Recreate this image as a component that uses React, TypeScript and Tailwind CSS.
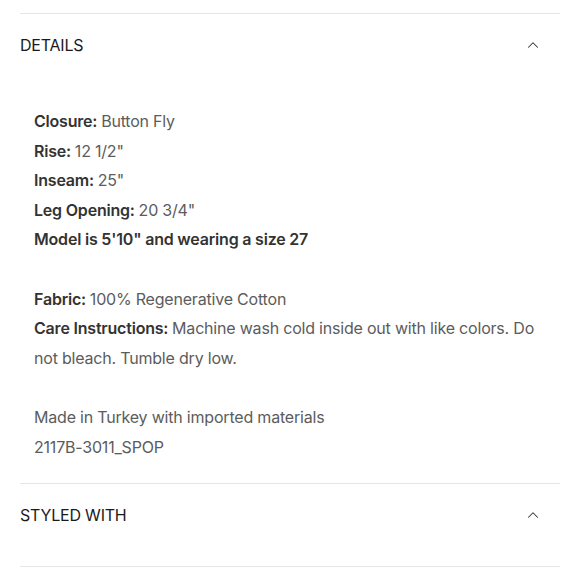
import { ChevronUp } from "lucide-react";

const details: { label?: string; value?: string; bold?: string }[][] = [
  [
    { label: "Closure:", value: "Button Fly" },
    { label: "Rise:", value: "12 1/2\"" },
    { label: "Inseam:", value: "25\"" },
    { label: "Leg Opening:", value: "20 3/4\"" },
    { bold: "Model is 5'10\" and wearing a size 27" },
  ],
  [
    { label: "Fabric:", value: "100% Regenerative Cotton" },
    {
      label: "Care Instructions:",
      value: "Machine wash cold inside out with like colors. Do not bleach. Tumble dry low.",
    },
  ],
  [{ value: "Made in Turkey with imported materials" }, { value: "2117B-3011_SPOP" }],
];

function SectionHeader({ title }: { title: string }) {
  return (
    <div className="flex h-[62px] items-center justify-between">
      <span className="text-[16px] tracking-[-0.2px] text-[#1a1a1a]">{title}</span>
      <ChevronUp className="mr-[18px] h-[18px] w-[18px] text-[#333]" strokeWidth={1.4} />
    </div>
  );
}

export default function App() {
  return (
    <div
      className="min-h-[580px] bg-white px-5 pt-[13px]"
      style={{ fontFamily: "Inter, 'Liberation Sans', sans-serif" }}
    >
      {/* Details */}
      <div className="border-t border-[#e6e6e6]">
        <SectionHeader title="DETAILS" />
        <div className="pb-[21px] pl-[14px] pr-[10px] pt-[31px] text-[16px] leading-[29.6px] tracking-[-0.2px] text-[#5c5c5c]">
          {details.map((group, gi) => (
            <div key={gi} className={gi > 0 ? "mt-[29.6px]" : ""}>
              {group.map((row, ri) => (
                <p key={ri}>
                  {row.bold && <span className="font-semibold text-[#333]">{row.bold}</span>}
                  {row.label && <span className="font-semibold text-[#333]">{row.label} </span>}
                  {row.value}
                </p>
              ))}
            </div>
          ))}
        </div>
      </div>

      {/* Styled with */}
      <div className="border-y border-[#e6e6e6]">
        <SectionHeader title="STYLED WITH" />
        <div className="h-[20px]" />
      </div>
    </div>
  );
}
